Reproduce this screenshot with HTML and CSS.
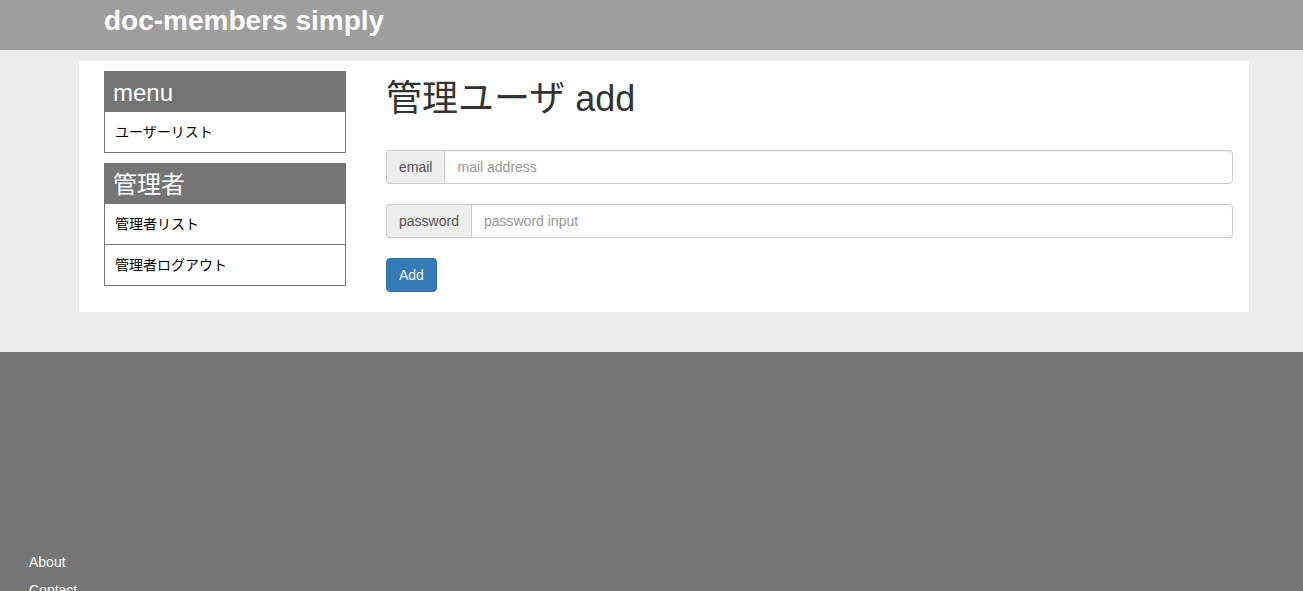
FILE: index.html
```html
<!DOCTYPE html>
<html lang="ja">
<head>
<meta charset="utf-8">
<title>doc-members simply</title>
<link rel="stylesheet" href="styles.css">
</head>
<body>
<header class="topbar">
  <div class="topbar-inner">
    <a class="brand" href="#">doc-members simply</a>
  </div>
</header>
<div class="page">
  <div class="container">
    <aside class="side">
      <div class="panel">
        <div class="panel-head">menu</div>
        <a class="panel-item" href="#">ユーザーリスト</a>
      </div>
      <div class="panel">
        <div class="panel-head">管理者</div>
        <a class="panel-item" href="#">管理者リスト</a>
        <a class="panel-item" href="#">管理者ログアウト</a>
      </div>
    </aside>
    <main class="main">
      <h1 class="title">管理ユーザ add</h1>
      <form class="form">
        <div class="input-group">
          <span class="addon">email</span>
          <input class="field" type="text" placeholder="mail address">
        </div>
        <div class="input-group">
          <span class="addon">password</span>
          <input class="field" type="password" placeholder="password input">
        </div>
        <button class="btn" type="button">Add</button>
      </form>
    </main>
  </div>
</div>
<footer class="footer">
  <ul class="footer-links">
    <li><a href="#">About</a></li>
    <li><a href="#">Contact</a></li>
  </ul>
</footer>
</body>
</html>
```
FILE: styles.css
```css
* { box-sizing: border-box; }
html, body { margin: 0; padding: 0; }
body {
  font-family: "Liberation Sans", Arial, "Noto Sans CJK JP", sans-serif;
  font-size: 14px;
  line-height: 1.42857;
  color: #333;
  background: #767676;
}
.topbar {
  height: 50px;
  background: #9e9e9e;
}
.topbar-inner {
  width: 1170px;
  margin-left: 79px;
  padding-left: 25px;
}
.brand {
  display: inline-block;
  color: #fff;
  font-weight: bold;
  font-size: 28px;
  line-height: 42px;
  text-decoration: none;
}
.page {
  background: #ececec;
  padding: 11px 0 40px;
}
.container {
  width: 1170px;
  margin-left: 79px;
  background: #fff;
  display: flex;
  align-items: flex-start;
  padding: 10px 16px 20px 25px;
}
.side {
  width: 242px;
  flex: none;
  margin-right: 40px;
  display: flex;
  flex-direction: column;
  gap: 10px;
}
.panel {
  border: 1px solid #777;
  display: flex;
  flex-direction: column;
}
.panel-head {
  background: #757575;
  color: #fff;
  font-size: 24px;
  height: 41px;
  line-height: 44px;
  padding: 0 9px;
  margin: -1px -1px 0;
  overflow: hidden;
}
.panel-item {
  display: block;
  height: 40px;
  line-height: 40px;
  padding: 0 10px;
  color: #000;
  text-decoration: none;
  font-size: 14px;
}
.panel-item + .panel-item { border-top: 1px solid #777; height: 41px; }
.main {
  flex: 1;
  min-width: 0;
}
.title {
  font-size: 36px;
  font-weight: 400;
  line-height: 40px;
  margin: 8px 0 31px;
  color: #333;
}
.form {
  display: flex;
  flex-direction: column;
  align-items: flex-start;
}
.input-group {
  display: flex;
  width: 100%;
  height: 34px;
  margin-bottom: 20px;
}
.addon {
  background: #eee;
  border: 1px solid #ccc;
  border-right: 0;
  border-radius: 4px 0 0 4px;
  color: #555;
  padding: 0 12px;
  line-height: 32px;
  font-size: 14px;
  white-space: nowrap;
}
.field {
  flex: 1;
  min-width: 0;
  border: 1px solid #ccc;
  border-radius: 0 4px 4px 0;
  padding: 6px 12px;
  font-family: inherit;
  font-size: 14px;
  color: #555;
  box-shadow: inset 0 1px 1px rgba(0,0,0,.075);
  outline: none;
}
.field::placeholder { color: #999; }
.btn {
  height: 34px;
  padding: 6px 12px;
  background: #337ab7;
  border: 1px solid #2e6da4;
  border-radius: 4px;
  color: #fff;
  font-family: inherit;
  font-size: 14px;
  line-height: 20px;
}
.footer {
  background: #767676;
  height: 239px;
  padding-top: 200px;
}
.footer-links {
  list-style: none;
  margin: 0;
  padding: 0 0 0 29px;
}
.footer-links li { line-height: 20px; margin-bottom: 8px; }
.footer-links a {
  color: #fff;
  text-decoration: none;
  font-size: 14px;
}
```
